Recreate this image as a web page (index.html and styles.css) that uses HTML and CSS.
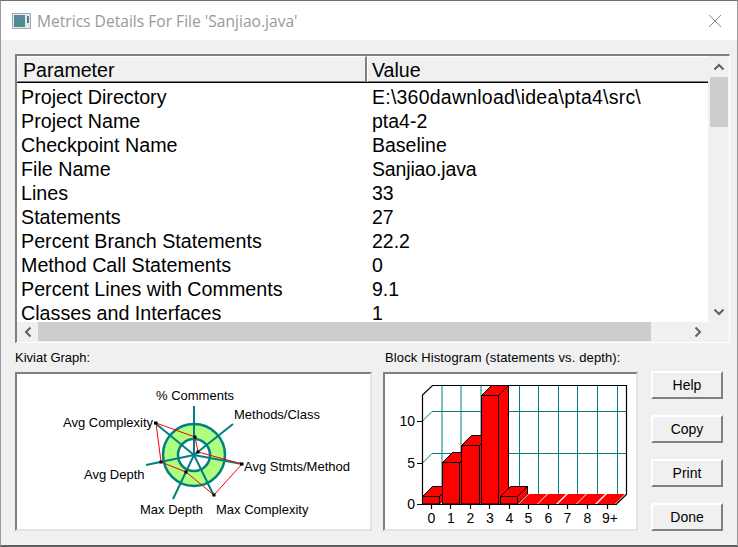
FILE: index.html
```html
<!DOCTYPE html>
<html lang="en">
<head>
<meta charset="utf-8">
<title>Metrics Details</title>
<link rel="stylesheet" href="styles.css">
</head>
<body>
<div class="window">
  <header class="titlebar">
    <svg class="app-icon" width="19" height="16" viewBox="0 0 19 16">
      <rect x="0.5" y="0.5" width="18" height="15" fill="#e4e9ec" stroke="#a3abb0"/>
      <rect x="2" y="2" width="11" height="12" fill="#4d8f86"/>
      <rect x="2" y="2" width="11" height="4" fill="#5f83a6"/>
      <rect x="15" y="3" width="2" height="7" fill="#5a7f8c"/>
    </svg>
    <span class="title">Metrics Details For File 'Sanjiao.java'</span>
    <svg class="close" width="14" height="14" viewBox="0 0 14 14">
      <path d="M1 1 L13 13 M13 1 L1 13" stroke="#8a8a8a" stroke-width="1" fill="none"/>
    </svg>
  </header>
  <main class="content">
    <section class="list-frame">
      <div class="list-top">
        <div class="table">
          <div class="table-head">
            <div class="head-cell head-param">Parameter</div>
            <div class="head-cell head-value">Value</div>
          </div>
          <div class="rows">
            <div class="row"><span class="name">Project Directory</span><span class="path">E:\360dawnload\idea\pta4\src\</span></div>
            <div class="row"><span class="name">Project Name</span><span>pta4-2</span></div>
            <div class="row"><span class="name">Checkpoint Name</span><span>Baseline</span></div>
            <div class="row"><span class="name">File Name</span><span class="narrow">Sanjiao.java</span></div>
            <div class="row"><span class="name">Lines</span><span>33</span></div>
            <div class="row"><span class="name">Statements</span><span>27</span></div>
            <div class="row"><span class="name">Percent Branch Statements</span><span>22.2</span></div>
            <div class="row"><span class="name">Method Call Statements</span><span>0</span></div>
            <div class="row"><span class="name">Percent Lines with Comments</span><span>9.1</span></div>
            <div class="row"><span class="name">Classes and Interfaces</span><span>1</span></div>
          </div>
        </div>
        <div class="vscroll">
          <div class="arrow-v"><svg width="12" height="8" viewBox="0 0 12 8"><path d="M1.5 6.5 L6 2 L10.5 6.5" class="chev"/></svg></div>
          <div class="vthumb"></div>
          <div class="fill"></div>
          <div class="arrow-v"><svg width="12" height="8" viewBox="0 0 12 8"><path d="M1.5 1.5 L6 6 L10.5 1.5" class="chev"/></svg></div>
        </div>
      </div>
      <div class="hscroll">
        <div class="arrow-h"><svg width="8" height="12" viewBox="0 0 8 12"><path d="M6.5 1.5 L2 6 L6.5 10.5" class="chev"/></svg></div>
        <div class="hthumb"></div>
        <div class="fill"></div>
        <div class="arrow-h"><svg width="8" height="12" viewBox="0 0 8 12"><path d="M1.5 1.5 L6 6 L1.5 10.5" class="chev"/></svg></div>
        <div class="corner"></div>
      </div>
    </section>
    <section class="lower">
      <div class="chart-col">
        <div class="chart-label">Kiviat Graph:</div>
        <div class="chart-panel">
          <svg class="chart" width="353" height="155" viewBox="17 374 353 155">
            <circle cx="194" cy="455" r="31" fill="#aeff7e" stroke="#008080" stroke-width="2.5"/>
            <circle cx="194" cy="455" r="16" fill="#fff" stroke="#008080" stroke-width="2.5"/>
            <g class="spokes">
              <line x1="194" y1="455" x2="194" y2="406"/>
              <line x1="194" y1="455" x2="233" y2="424"/>
              <line x1="194" y1="455" x2="242" y2="464"/>
              <line x1="194" y1="455" x2="214" y2="496"/>
              <line x1="194" y1="455" x2="173" y2="499"/>
              <line x1="194" y1="455" x2="146" y2="465"/>
              <line x1="194" y1="455" x2="155" y2="423"/>
            </g>
            <polygon class="poly" points="195,437 198,452 242,464 214,495 186,472 161,462 156,423"/>
            <g class="marks">
              <rect x="193.5" y="435.5" width="3" height="3"/>
              <rect x="196.5" y="450.5" width="3" height="3"/>
              <rect x="240" y="462.5" width="3.5" height="3"/>
              <rect x="212.5" y="493.5" width="3" height="3"/>
              <rect x="184.5" y="470.5" width="3" height="3"/>
              <rect x="159.5" y="460.5" width="3" height="3"/>
              <rect x="154" y="421.5" width="3.5" height="3"/>
            </g>
            <g class="kv-text">
              <text x="156" y="400">% Comments</text>
              <text x="234" y="419">Methods/Class</text>
              <text x="63" y="427">Avg Complexity</text>
              <text x="244" y="471">Avg Stmts/Method</text>
              <text x="84" y="479">Avg Depth</text>
              <text x="140" y="514">Max Depth</text>
              <text x="216" y="514">Max Complexity</text>
            </g>
          </svg>
        </div>
      </div>
      <div class="chart-col hist-col">
        <div class="chart-label hist-label">Block Histogram (statements vs. depth):</div>
        <div class="chart-panel">
          <svg class="chart" width="251" height="155" viewBox="385 374 251 155">
            <g class="grid">
              <path d="M422 421.5 L432 411.5 H627 M422 463.5 L432 453.5 H627"/>
              <path d="M442 385 V494 M461 385 V494 M481 385 V494 M500 385 V494 M519.5 385 V494 M538.5 385 V494 M558.5 385 V494 M577.5 385 V494 M597.5 385 V494 M617.5 385 V494"/>
            </g>
            <path class="axis" d="M422.5 504 V395 L432.5 385.5 H626.5 V494.5 L616.5 504"/>
            <g class="flat">
              <polygon points="519,504 529,494 547,494 537,504"/>
              <polygon points="538,504 548,494 566,494 556,504"/>
              <polygon points="558,504 568,494 586,494 576,504"/>
              <polygon points="577,504 587,494 605,494 595,504"/>
              <polygon points="597,504 607,494 625,494 615,504"/>
            </g>
            <g class="bar">
              <path d="M422.5 496.5 L432.5 486.5 H449.5 V494 L439.5 504 H422.5 Z"/>
              <path d="M422.5 496.5 H439.5 V504 M439.5 496.5 L449.5 486.5"/>
              <path d="M442.5 462.5 L452.5 452.5 H469.5 V494 L459.5 504 H442.5 Z"/>
              <path d="M442.5 462.5 H459.5 V504 M459.5 462.5 L469.5 452.5"/>
              <path d="M461.5 445.5 L471.5 435.5 H489.5 V494 L479.5 504 H461.5 Z"/>
              <path d="M461.5 445.5 H479.5 V504 M479.5 445.5 L489.5 435.5"/>
              <path d="M481.5 395.5 L491.5 385.5 H508.5 V494 L498.5 504 H481.5 Z"/>
              <path d="M481.5 395.5 H498.5 V504 M498.5 395.5 L508.5 385.5"/>
              <path d="M500.5 496.5 L510.5 486.5 H527.5 V494 L517.5 504 H500.5 Z"/>
              <path d="M500.5 496.5 H517.5 V504 M517.5 496.5 L527.5 486.5"/>
            </g>
            <path class="axis" d="M417 504.5 H617 M417 463.5 H422 M417 421.5 H422 M431.5 504 V509 M450.5 504 V509 M470.5 504 V509 M489.5 504 V509 M509.5 504 V509 M528.5 504 V509 M548.5 504 V509 M567.5 504 V509 M587.5 504 V509 M607.5 504 V509"/>
            <g class="y-text">
              <text x="415" y="426">10</text>
              <text x="415" y="468">5</text>
              <text x="415" y="509">0</text>
            </g>
            <g class="x-text">
              <text x="431.5" y="523">0</text>
              <text x="451" y="523">1</text>
              <text x="470.5" y="523">2</text>
              <text x="490" y="523">3</text>
              <text x="509.5" y="523">4</text>
              <text x="528.5" y="523">5</text>
              <text x="548.5" y="523">6</text>
              <text x="567.5" y="523">7</text>
              <text x="587.5" y="523">8</text>
              <text x="610" y="523">9+</text>
            </g>
          </svg>
        </div>
      </div>
      <div class="buttons">
        <button class="btn">Help</button>
        <button class="btn">Copy</button>
        <button class="btn">Print</button>
        <button class="btn">Done</button>
      </div>
    </section>
  </main>
</div>
</body>
</html>
```
FILE: styles.css
```css
* { box-sizing: border-box; }
html, body { margin: 0; padding: 0; }
body {
  width: 738px;
  height: 547px;
  overflow: hidden;
  background: #f0f0f0;
  font-family: "Liberation Sans", Arial, sans-serif;
  color: #000;
}
.window {
  width: 738px;
  height: 547px;
  display: flex;
  flex-direction: column;
  border-top: 1px solid #707070;
  border-left: 1px solid #9a9a9a;
  border-right: 1px solid #9a9a9a;
  border-bottom: 2px solid #606060;
  background: #f0f0f0;
}
.titlebar {
  height: 39px;
  flex: none;
  background: #fff;
  display: flex;
  align-items: center;
  padding: 0 15px 0 11px;
}
.app-icon { flex: none; margin-right: 6px; }
.title {
  flex: 1;
  font-family: "Open Sans", sans-serif;
  font-size: 15.6px;
  color: #999;
  white-space: nowrap;
}
.close { flex: none; }
.content {
  flex: 1;
  padding: 14px 0 0 14px;
  display: flex;
  flex-direction: column;
}
.list-frame {
  width: 715px;
  height: 289px;
  flex: none;
  border-top: 2px solid #808080;
  border-left: 2px solid #808080;
  border-right: 1px solid #fff;
  border-bottom: 1px solid #fff;
  display: flex;
  flex-direction: column;
}
.list-top { display: flex; height: 266px; flex: none; }
.table { width: 691px; flex: none; background: #fff; display: flex; flex-direction: column; }
.table-head { display: flex; height: 27px; flex: none; background: #f0f0f0; border-bottom: 1px solid #000; font-size: 19.6px; }
.head-cell {
  height: 26px;
  line-height: 26px;
  border-top: 1px solid #fff;
  border-left: 1px solid #fff;
  border-bottom: 1px solid #808080;
  border-right: 2px solid #808080;
}
.head-param { width: 350px; padding-left: 5px; }
.head-value { flex: 1; padding-left: 4px; border-right: none; }
.rows { padding-top: 2px; font-size: 19.5px; }
.row { display: flex; height: 24px; line-height: 24px; padding-left: 4px; white-space: nowrap; }
.name { width: 351px; flex: none; font-size: 19.7px; }
.path { letter-spacing: 0.23px; }
.narrow { letter-spacing: -0.15px; }
.vscroll { width: 21px; flex: none; display: flex; flex-direction: column; background: #f0f0f0; position: relative; }
.arrow-v { height: 21px; flex: none; display: flex; align-items: center; justify-content: center; }
.vthumb { height: 50px; margin: 0 1px 0 2px; flex: none; background: #cdcdcd; }
.fill { flex: 1; }
.hscroll { display: flex; height: 20px; flex: none; background: #f0f0f0; position: relative; }
.arrow-h { width: 21px; flex: none; display: flex; align-items: center; justify-content: center; }
.hthumb { width: 613px; height: 19px; flex: none; background: #cdcdcd; }
.corner { width: 21px; flex: none; }
.chev { fill: none; stroke: #606060; stroke-width: 2; }
.lower {
  display: grid;
  grid-template-columns: 357px 255px 72px;
  column-gap: 11px;
  margin-top: 7px;
}
.chart-col { display: flex; flex-direction: column; }
.chart-label { height: 22px; font-size: 13px; line-height: 16px; white-space: nowrap; }
.hist-label { padding-left: 2px; letter-spacing: 0.13px; }
.chart-panel {
  height: 159px;
  background: #fff;
  border-top: 2px solid #808080;
  border-left: 2px solid #808080;
  border-right: 2px solid #e3e3e3;
  border-bottom: 2px solid #e3e3e3;
}
.chart { display: block; }
.spokes line { stroke: #008080; stroke-width: 2; }
.poly { fill: none; stroke: #f00; stroke-width: 1; }
.marks rect { fill: #000; }
.kv-text text { font-size: 13px; fill: #000; }
.grid path { fill: none; stroke: #008080; stroke-width: 1; }
.axis { fill: none; stroke: #000; stroke-width: 1.2; }
.flat polygon { fill: #f00; }
.bar path { fill: #f00; stroke: #000; stroke-width: 1; }
.bar path:nth-child(even) { fill: none; }
.y-text text { font-size: 14px; text-anchor: end; }
.x-text text { font-size: 14px; text-anchor: middle; }
.buttons { display: flex; flex-direction: column; gap: 16px; margin-top: 21px; margin-left: 2px; width: 72px; }
.btn {
  height: 28px;
  width: 72px;
  padding: 0;
  background: #f0f0f0;
  border-top: 2px solid #fff;
  border-left: 2px solid #fff;
  border-right: 2px solid #808080;
  border-bottom: 2px solid #808080;
  border-radius: 0;
  font-family: "Liberation Sans", Arial, sans-serif;
  font-size: 14px;
  color: #000;
}
```
